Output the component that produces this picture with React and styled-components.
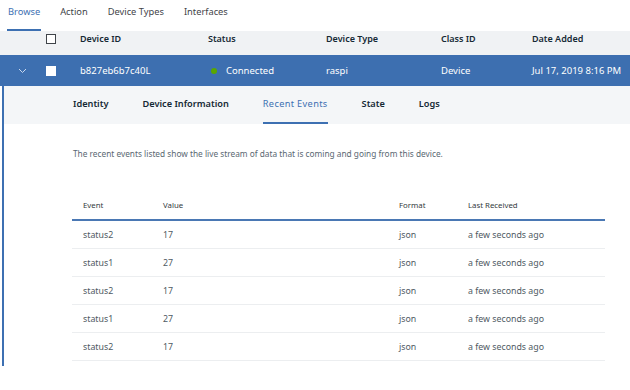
import React from 'react';
import styled, { createGlobalStyle } from 'styled-components';

const GlobalStyle = createGlobalStyle`
  * {
    box-sizing: border-box;
  }
  body {
    margin: 0;
    background: #ffffff;
    font-family: 'Noto Sans', 'Open Sans', sans-serif;
  }
`;

const Page = styled.div`
  width: 630px;
  height: 390px;
  overflow: hidden;
  background: #ffffff;
`;

const TopNav = styled.nav`
  display: flex;
  gap: 18px;
  height: 31px;
  padding: 0 0 0 7px;
`;

const NavItem = styled.div`
  font-size: 9.3px;
  line-height: 24px;
  height: 31px;
  padding: 0 1px;
  color: ${(props) => (props.active ? '#3d70b2' : '#3f4449')};
  border-bottom: 2px solid
    ${(props) => (props.active ? '#3d70b2' : 'transparent')};
`;

const GridRow = styled.div`
  display: grid;
  grid-template-columns: 36px 44px 128px 118px 115px 91px 1fr;
  align-items: center;
`;

const HeaderRow = styled(GridRow)`
  height: 24px;
  padding: 1px 0 10px;
  background: #f0f2f4;
  font-size: 9px;
  font-weight: 600;
  color: #152935;
`;

const DeviceRow = styled(GridRow)`
  height: 31px;
  background: #3d6fb0;
  font-size: 9.5px;
  color: #ffffff;
`;

const Chevron = styled.div`
  display: flex;
  padding-left: 18px;
`;

const Checkbox = styled.div`
  width: 10px;
  height: 10px;
  margin-left: 10px;
  border: 1.5px solid ${(props) => (props.light ? '#ffffff' : '#3f4449')};
  background: #ffffff;
`;

const Status = styled.div`
  display: flex;
  align-items: center;
  gap: 9px;
  padding-left: 3px;
`;

const Dot = styled.span`
  width: 6px;
  height: 6px;
  border-radius: 50%;
  background: #5aa700;
`;

const Panel = styled.div`
  margin-left: 2px;
  border-left: 2px solid #3d70b2;
  padding-bottom: 5px;
`;

const SubTabs = styled.div`
  display: flex;
  gap: 34px;
  height: 38px;
  padding-left: 69px;
  background: #f4f6f8;
`;

const SubTab = styled.div`
  font-size: 9.2px;
  line-height: 36px;
  color: ${(props) => (props.active ? '#3d70b2' : '#152935')};
  font-weight: ${(props) => (props.active ? 400 : 600)};
  letter-spacing: ${(props) => (props.active ? '0.35px' : '0')};
  border-bottom: 2px solid
    ${(props) => (props.active ? '#3d70b2' : 'transparent')};
`;

const Description = styled.p`
  margin: 24px 0 0 69px;
  font-size: 8.3px;
  line-height: 12px;
  color: #5a6872;
`;

const EventTable = styled.div`
  margin: 30px 0 0 68px;
  width: 533px;
`;

const EventRow = styled.div`
  display: grid;
  grid-template-columns: 80px 236px 69px 1fr;
  align-items: center;
  height: ${(props) => (props.head ? '31px' : '28px')};
  border-bottom: ${(props) =>
    props.head ? '2px solid #4a78b4' : '1px solid #eceef0'};
  font-size: ${(props) => (props.head ? '7.8px' : '8.8px')};
  color: ${(props) => (props.head ? '#333a40' : '#4f5a63')};
`;

const Cell = styled.div`
  padding-left: 11px;
`;

const events = [
  { name: 'status2', value: 17 },
  { name: 'status1', value: 27 },
  { name: 'status2', value: 17 },
  { name: 'status1', value: 27 },
  { name: 'status2', value: 17 },
];

function App() {
  return (
    <Page>
      <GlobalStyle />
      <TopNav>
        <NavItem active>Browse</NavItem>
        <NavItem>Action</NavItem>
        <NavItem>Device Types</NavItem>
        <NavItem>Interfaces</NavItem>
      </TopNav>

      <HeaderRow>
        <div />
        <Checkbox />
        <div>Device ID</div>
        <div>Status</div>
        <div>Device Type</div>
        <div>Class ID</div>
        <div>Date Added</div>
      </HeaderRow>

      <DeviceRow>
        <Chevron>
          <svg width="9" height="6" viewBox="0 0 9 6">
            <path d="M1 1 L4.5 4.5 L8 1" fill="none" stroke="#c9d8ee" strokeWidth="1" />
          </svg>
        </Chevron>
        <Checkbox light />
        <div>b827eb6b7c40L</div>
        <Status>
          <Dot />
          Connected
        </Status>
        <div>raspi</div>
        <div>Device</div>
        <div>Jul 17, 2019 8:16 PM</div>
      </DeviceRow>

      <Panel>
        <SubTabs>
          <SubTab>Identity</SubTab>
          <SubTab>Device Information</SubTab>
          <SubTab active>Recent Events</SubTab>
          <SubTab>State</SubTab>
          <SubTab>Logs</SubTab>
        </SubTabs>

        <Description>
          The recent events listed show the live stream of data that is coming
          and going from this device.
        </Description>

        <EventTable>
          <EventRow head>
            <Cell>Event</Cell>
            <Cell>Value</Cell>
            <Cell>Format</Cell>
            <Cell>Last Received</Cell>
          </EventRow>
          {events.map((ev, i) => (
            <EventRow key={i}>
              <Cell>{ev.name}</Cell>
              <Cell>{ev.value}</Cell>
              <Cell>json</Cell>
              <Cell>a few seconds ago</Cell>
            </EventRow>
          ))}
        </EventTable>
      </Panel>
    </Page>
  );
}

export default App;
